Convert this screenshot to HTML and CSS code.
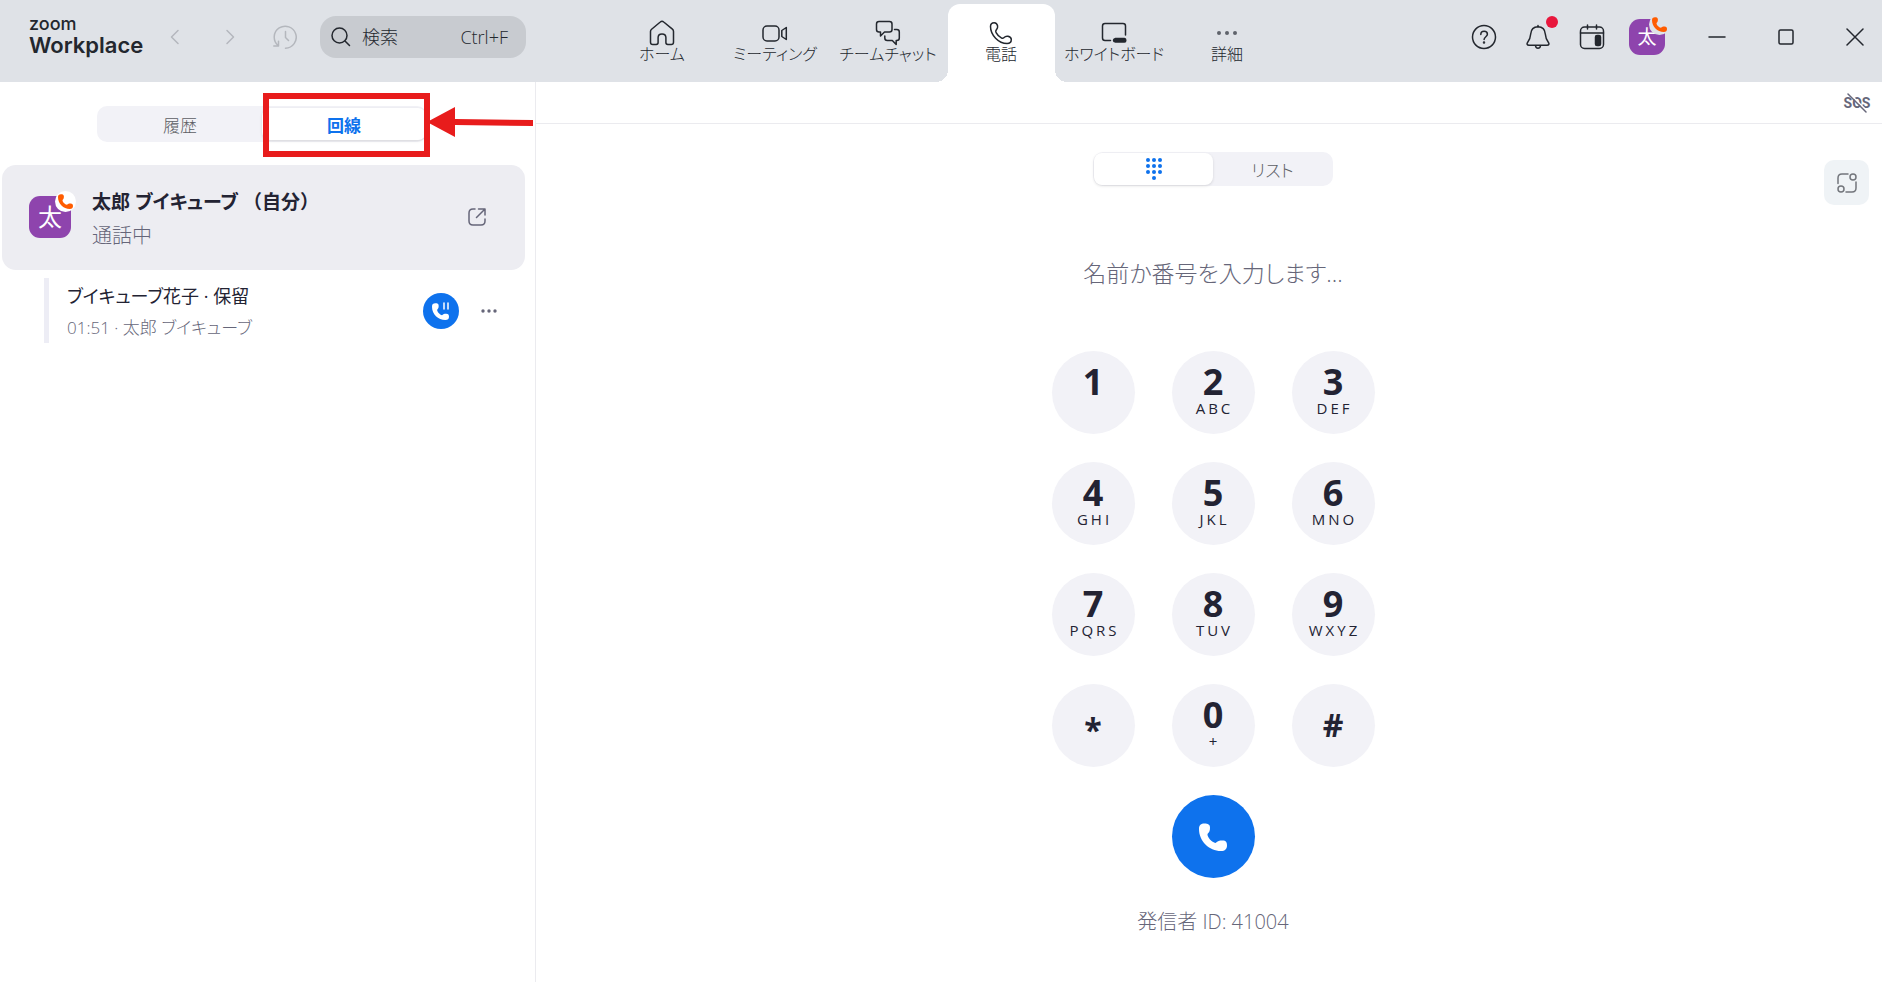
FILE: index.html
```html
<!DOCTYPE html>
<html lang="ja">

<head>
  <meta charset="UTF-8" />
  <meta name="viewport" content="width=device-width, initial-scale=1.0" />
  <title>Zoom Workplace</title>
  <link rel="stylesheet" href="styles.css">
</head>

<body>
  <!-- shared handset shape -->
  <svg class="defs" aria-hidden="true">
    <symbol id="handset" viewBox="0 0 28 28">
      <path d="M0 6C0 2 2 .5 5.5 .5S11 1.500 11 4.500 10.500 9 8.500 11C8 14 13 19.500 16.500 20 19 18 20 17.500 23.500 17.500S28 19 28 22.500 26 28 22 28C10 28 0 18 0 6Z" />
    </symbol>
  </svg>

  <header class="topbar">
    <div class="topbar-left">
      <div class="logo">
        <span class="logo-zoom">zoom</span>
        <span class="logo-work">Workplace</span>
      </div>
      <div class="history-nav">
        <button class="icon-btn faded" aria-label="戻る">
          <svg width="24" height="24" viewBox="0 0 24 24"><path d="M15 5.500L8.500 12l6.500 6.500" /></svg>
        </button>
        <button class="icon-btn faded" aria-label="進む">
          <svg width="24" height="24" viewBox="0 0 24 24"><path d="M9 5.500l6.500 6.500L9 18.500" /></svg>
        </button>
        <button class="icon-btn faded" aria-label="履歴を表示">
          <svg width="24" height="24" viewBox="0 0 24 24"><path d="M5 20.500A11 11 0 1 1 12.500 23.200M.8 21h4.700v-4.700M12.500 6.500v6l3 3" /></svg>
        </button>
      </div>
      <label class="search">
        <svg width="20" height="20" viewBox="0 0 20 20"><circle cx="8.500" cy="8.500" r="7.500" /><path d="M14 14L18.500 18.500" /></svg>
        <input type="text" placeholder="検索" aria-label="検索" />
        <span>Ctrl+F</span>
      </label>
    </div>

    <nav class="tabs">
      <button class="tab">
        <svg width="26" height="26" viewBox="0 0 26 26"><path d="M1.500 11.500c0-1 .4-1.700 1.100-2.300L11.300 2c1-.9 2.400-.9 3.400 0l8.700 7.200c.7.600 1.100 1.300 1.100 2.300v10.700c0 1.500-.8 2.300-2.300 2.300h-3.400c-1.200 0-1.900-.7-1.900-1.900v-5c0-2.200-1.500-3.700-3.900-3.700s-3.900 1.500-3.900 3.700v5c0 1.200-.7 1.900-1.900 1.900H3.800c-1.500 0-2.300-.8-2.300-2.300z" /></svg>
        ホーム
      </button>
      <button class="tab">
        <svg width="26" height="26" viewBox="0 0 26 26"><rect x="1" y="6" width="16" height="15" rx="4" /><path d="M24.300 7.500v12l-4.500-3v-6z" /></svg>
        ミーティング
      </button>
      <button class="tab">
        <svg width="26" height="26" viewBox="0 0 26 26"><path d="M4 1.500h10.500q2.500 0 2.500 2.500v5.500q0 2.500-2.500 2.500H9.500L5.500 16v-4H4Q1.500 12 1.500 9.500V4Q1.500 1.500 4 1.500zM19.500 9.500h2.300q2.500 0 2.500 2.500v6q0 2.500-2.500 2.500h-.6v4l-3.900-4h-5q-2.500 0-2.500-2.500v-2" /></svg>
        チームチャット
      </button>
      <button class="tab active">
        <svg width="26" height="26" viewBox="0 0 26 26"><path d="M2.500 6.500C2.500 4 4 2.700 6.200 2.700c2 0 3 1.300 3.400 3.200.4 2-.2 3-1.400 4.200-.7.700-.6 1.600-.1 2.500 1.200 2.300 2.900 4 5.200 5.200.9.500 1.800.6 2.500-.1 1.200-1.200 2.300-1.800 4.200-1.400 2 .4 3.300 1.400 3.300 3.200 0 2.500-1.500 4-4.200 4C10.500 23.500 2.500 15 2.500 6.500z" /></svg>
        電話
      </button>
      <button class="tab">
        <svg width="26" height="26" viewBox="0 0 26 26"><path d="M9.500 20.500H4Q1.500 20.500 1.500 18V6Q1.500 3.500 4 3.500h18q2.500 0 2.500 2.500v9" /><path class="solid" d="M14.500 18.500h9q1.300 0 1.300 1.800t-1.300 1.800h-9q-2-.4-2-1.800t2-1.800z" /></svg>
        ホワイトボード
      </button>
      <button class="tab">
        <svg width="26" height="26" viewBox="0 0 26 26"><g class="dots dots-soft"><circle cx="5" cy="13" r="2" /><circle cx="13" cy="13" r="2" /><circle cx="21" cy="13" r="2" /></g></svg>
        詳細
      </button>
    </nav>

    <div class="topbar-right">
      <button class="icon-btn" aria-label="ヘルプ">
        <svg width="26" height="26" viewBox="0 0 26 26"><circle cx="13" cy="13" r="11.500" /><path d="M9.800 10.500c0-2 1.400-3.200 3.300-3.200s3.300 1.200 3.300 3c0 2.400-3.300 2.500-3.300 5.200" /><circle class="solid" cx="13" cy="18.500" r=".5" /></svg>
      </button>
      <button class="icon-btn bell" aria-label="通知">
        <svg width="26" height="26" viewBox="0 0 26 26"><path d="M13 1.500v1.200M13 2.700c-4.400 0-7 3-7.300 7.300-.3 3.300-.7 5.500-3 8.300-1.300 1.700-.6 3 1.300 3h18c1.900 0 2.600-1.300 1.300-3-2.300-2.800-2.700-5-3-8.300-.3-4.300-2.900-7.300-7.300-7.300zM10.500 21.500c.2 3.500 4.800 3.500 5 0" /></svg>
      </button>
      <button class="icon-btn" aria-label="カレンダー">
        <svg width="26" height="26" viewBox="0 0 26 26"><rect x="1.500" y="3" width="23" height="21.500" rx="4" /><path d="M1.500 9h23M8.500 1v4M17.500 1v4" /><rect class="solid" x="16.500" y="11.500" width="5" height="10" rx="1.500" /></svg>
      </button>
      <button class="avatar avatar-top" aria-label="プロフィール">
        太
        <span class="badge"><svg width="15" height="15"><use href="#handset" /></svg></span>
      </button>
      <div class="window-btns">
        <button class="icon-btn" aria-label="最小化"><svg width="18" height="18" viewBox="0 0 18 18"><path d="M1 9h16" /></svg></button>
        <button class="icon-btn" aria-label="最大化"><svg width="18" height="18" viewBox="0 0 18 18"><rect x="2" y="2" width="14" height="14" rx="1.500" /></svg></button>
        <button class="icon-btn" aria-label="閉じる"><svg width="18" height="18" viewBox="0 0 18 18"><path d="M1 1l16 16M17 1L1 17" /></svg></button>
      </div>
    </div>
  </header>

  <div class="content">
    <aside class="sidebar">
      <div class="segment">
        <button>履歴</button>
        <button class="selected">回線</button>
        <!-- red callout around the selected segment -->
        <div class="callout"></div>
        <svg class="callout-arrow" width="106" height="30" viewBox="0 0 106 30"><path d="M0 15L28 0v12l78 1v6l-78-1v12z" /></svg>
      </div>

      <div class="line-card">
        <div class="avatar">
          太
          <span class="badge"><svg width="15" height="15"><use href="#handset" /></svg></span>
        </div>
        <div class="line-text">
          <h1>太郎 ブイキューブ <span>（自分）</span></h1>
          <p>通話中</p>
        </div>
        <button class="icon-btn muted" aria-label="開く">
          <svg width="18" height="18" viewBox="0 0 18 18"><path d="M7 1H5Q1 1 1 5v8q0 4 4 4h8q4 0 4-4v-2M10.500 1H17v6M17 1L8.500 9.500" /></svg>
        </button>
      </div>

      <div class="held-call">
        <div class="held-text">
          <h2>ブイキューブ花子 · 保留</h2>
          <p>01:51 · 太郎 ブイキューブ</p>
        </div>
        <button class="resume" aria-label="再開">
          <svg width="20" height="20" viewBox="0 0 20 20"><use href="#handset" x="1" y="2" width="17" height="17" /><path d="M13 2v6M17 2v6" /></svg>
        </button>
        <button class="icon-btn muted" aria-label="その他">
          <svg width="18" height="18" viewBox="0 0 18 18"><g class="dots"><circle cx="3" cy="9" r="1.700" /><circle cx="9" cy="9" r="1.700" /><circle cx="15" cy="9" r="1.700" /></g></svg>
        </button>
      </div>
    </aside>

    <main class="phone">
      <div class="subbar">
        <div class="sos">
          <span>SOS</span>
          <svg width="24" height="20" viewBox="0 0 24 20"><path class="gap" d="M4.500 .5l18 18" /><path d="M3 1l18 18" /></svg>
        </div>
      </div>

      <button class="route-btn" aria-label="転送設定">
        <svg width="20" height="20" viewBox="0 0 20 20"><path d="M1 10.500V5q0-4 4-4h6M19 9v6q0 4-4 4H9" /><circle cx="16" cy="4" r="3" /><circle cx="4" cy="16" r="3" /></svg>
      </button>

      <div class="dialer">
        <div class="toggle">
          <button class="selected" aria-label="ダイヤルパッド">
            <svg width="18" height="24" viewBox="0 0 18 24">
              <circle cx="3" cy="3" r="2" /><circle cx="9" cy="3" r="2" /><circle cx="15" cy="3" r="2" />
              <circle cx="3" cy="9" r="2" /><circle cx="9" cy="9" r="2" /><circle cx="15" cy="9" r="2" />
              <circle cx="3" cy="15" r="2" /><circle cx="9" cy="15" r="2" /><circle cx="15" cy="15" r="2" />
              <circle cx="9" cy="21" r="2" />
            </svg>
          </button>
          <button>リスト</button>
        </div>

        <input class="number" type="text" placeholder="名前か番号を入力します..." aria-label="名前か番号" />

        <div class="keypad">
          <button class="key"><b>1</b><span></span></button>
          <button class="key"><b>2</b><span>ABC</span></button>
          <button class="key"><b>3</b><span>DEF</span></button>
          <button class="key"><b>4</b><span>GHI</span></button>
          <button class="key"><b>5</b><span>JKL</span></button>
          <button class="key"><b>6</b><span>MNO</span></button>
          <button class="key"><b>7</b><span>PQRS</span></button>
          <button class="key"><b>8</b><span>TUV</span></button>
          <button class="key"><b>9</b><span>WXYZ</span></button>
          <button class="key symbol star"><b>*</b></button>
          <button class="key"><b>0</b><span>+</span></button>
          <button class="key symbol"><b>#</b></button>
        </div>

        <button class="call" aria-label="発信">
          <svg width="28" height="28"><use href="#handset" /></svg>
        </button>
        <p class="caller-id">発信者 ID: 41004</p>
      </div>
    </main>
  </div>
</body>

</html>
```
FILE: styles.css
```css
:root {
  --bar: #dfe2e7;
  --ink: #23272e;
  --dark: #232333;
  --muted: #666679;
  --soft: #f2f2f7;
  --blue: #0e72ed;
  --orange: #ff5c00;
  --purple: #8e44ad;
  --red: #e81c1c;
}

* {
  box-sizing: border-box;
}

body {
  margin: 0;
  min-height: 100vh;
  display: flex;
  flex-direction: column;
  font-family: "Open Sans", "Noto Sans CJK JP", sans-serif;
  font-feature-settings: "palt";
  font-weight: 300;
  color: var(--dark);
  background: #fff;
}

button,
input {
  font: inherit;
  font-feature-settings: inherit;
  color: inherit;
  border: none;
  background: none;
  padding: 0;
}

button {
  cursor: pointer;
}

h1,
h2,
p {
  margin: 0;
}

svg {
  display: block;
  flex: none;
  fill: none;
  stroke: currentColor;
  stroke-width: 1.5;
  stroke-linecap: round;
  stroke-linejoin: round;
}

.defs {
  position: absolute;
  width: 0;
  height: 0;
}

.solid,
.dots {
  fill: currentColor;
}

.dots {
  stroke: none;
}

.dots-soft {
  fill: #5f636b;
}

/* top bar */
.topbar {
  display: grid;
  grid-template-columns: 1fr auto 1fr;
  height: 82px;
  padding: 0 18px 0 25px;
  background: var(--bar);
  color: var(--ink);
}

.topbar-left,
.topbar-right {
  display: flex;
  align-items: center;
  height: 74px;
}

.logo {
  display: flex;
  flex-direction: column;
  width: 138px;
  padding-left: 4px;
  font-family: Inter, sans-serif;
}

.logo-zoom {
  font-size: 18px;
  font-weight: 500;
  line-height: 16px;
}

.logo-work {
  font-size: 22px;
  font-weight: 600;
  line-height: 26px;
}

.history-nav {
  display: flex;
  gap: 31px;
}

.icon-btn {
  display: flex;
}

.faded {
  color: #b4b7bd;
}

.search {
  display: flex;
  align-items: center;
  gap: 11px;
  width: 206px;
  height: 42px;
  margin-left: 23px;
  padding: 0 18px 0 11px;
  border-radius: 16px;
  background: #c8cbd0;
  font-size: 18px;
}

.search input {
  flex: 1;
  min-width: 0;
}

.search input::placeholder {
  color: var(--ink);
  opacity: 1;
}

.tabs {
  display: flex;
  gap: 6px;
  padding-top: 4px;
}

.tab {
  position: relative;
  display: flex;
  flex-direction: column;
  align-items: center;
  width: 107px;
  padding-top: 16px;
  font-size: 16px;
  line-height: 16px;
  white-space: nowrap;
}

.tab.active {
  background: #fff;
  border-radius: 12px 12px 0 0;
}

.tab.active::before,
.tab.active::after {
  content: "";
  position: absolute;
  bottom: 0;
  width: 12px;
  height: 12px;
}

.tab.active::before {
  right: 100%;
  background: radial-gradient(circle at 0 0, transparent 12px, #fff 12px);
}

.tab.active::after {
  left: 100%;
  background: radial-gradient(circle at 100% 0, transparent 12px, #fff 12px);
}

.topbar-right {
  justify-content: flex-end;
  gap: 28px;
}

.bell {
  position: relative;
}

.bell::after {
  content: "";
  position: absolute;
  top: -8px;
  right: -7px;
  width: 12px;
  height: 12px;
  border-radius: 50%;
  background: #e8173d;
}

.avatar {
  position: relative;
  flex: none;
  width: 42px;
  height: 42px;
  border-radius: 11px;
  background: var(--purple);
  color: #fff;
  font-size: 24px;
  font-weight: 400;
  line-height: 42px;
  text-align: center;
}

.avatar-top {
  width: 36px;
  height: 36px;
  margin-left: -4px;
  font-size: 19px;
  line-height: 36px;
}

.badge {
  position: absolute;
  top: -5px;
  right: -5px;
  display: flex;
  align-items: center;
  justify-content: center;
  width: 21px;
  height: 21px;
  border-radius: 50%;
  background: #fff;
  color: var(--orange);
}

.avatar-top .badge {
  background: var(--bar);
}

.badge svg,
.call svg {
  fill: currentColor;
  stroke: none;
}

.window-btns {
  display: flex;
  gap: 51px;
  margin-left: 15px;
}

/* sidebar */
.content {
  flex: 1;
  display: flex;
}

.sidebar {
  flex: none;
  width: 536px;
  padding-top: 24px;
  border-right: 1px solid #ebebef;
}

.segment {
  position: relative;
  display: flex;
  width: 330px;
  height: 36px;
  margin: 0 auto 23px 97px;
  padding: 2px 1px;
  border-radius: 10px;
  background: var(--soft);
  color: #5c5e64;
  font-size: 17px;
}

.segment button,
.toggle button {
  flex: 1;
  display: flex;
  align-items: center;
  justify-content: center;
}

.segment .selected,
.toggle .selected {
  border-radius: 8px;
  background: #fff;
  box-shadow: 0 1px 3px rgba(0, 0, 0, 0.12);
  color: var(--blue);
  font-weight: bold;
}

.callout {
  position: absolute;
  top: -13px;
  right: -3px;
  width: 167px;
  height: 64px;
  border: 6px solid var(--red);
}

.callout-arrow {
  position: absolute;
  top: 1px;
  left: 100%;
  fill: var(--red);
  stroke: none;
}

.line-card {
  display: flex;
  align-items: center;
  gap: 21px;
  height: 105px;
  margin: 0 10px 8px 2px;
  padding: 0 39px 2px 27px;
  border-radius: 14px;
  background: #ededf2;
}

.line-text {
  flex: 1;
  padding-top: 4px;
}

.line-text h1 {
  font-size: 19px;
  font-weight: bold;
  line-height: 34px;
}

/* full-width brackets keep their own spacing */
.line-text h1 span {
  font-feature-settings: normal;
}

.line-text p {
  color: var(--muted);
  font-size: 20px;
  line-height: 34px;
}

.muted {
  color: var(--muted);
}

.held-call {
  display: flex;
  align-items: center;
  height: 65px;
  margin: 0 37px 0 44px;
  padding-left: 18px;
  border-left: 5px solid #ededf5;
}

.held-text {
  flex: 1;
  padding-top: 2px;
}

.held-text h2 {
  font-size: 18px;
  font-weight: 400;
  line-height: 32px;
}

.held-text p {
  color: var(--muted);
  font-size: 17px;
  line-height: 32px;
}

.resume {
  display: flex;
  align-items: center;
  justify-content: center;
  width: 36px;
  height: 36px;
  margin-right: 21px;
  border-radius: 50%;
  background: var(--blue);
  color: #fff;
}

.resume use {
  fill: currentColor;
  stroke: none;
}

/* phone */
.phone {
  position: relative;
  flex: 1;
}

.subbar {
  display: flex;
  align-items: center;
  justify-content: flex-end;
  height: 42px;
  padding-right: 13px;
  border-bottom: 1px solid #ebebef;
}

.sos {
  position: relative;
  display: flex;
  justify-content: center;
  width: 24px;
  color: var(--muted);
  font-family: "Liberation Sans Narrow", Roboto, sans-serif;
  font-size: 14px;
  font-weight: bold;
  line-height: 20px;
}

.sos svg {
  position: absolute;
  top: 0;
  left: 0;
}

.sos .gap {
  stroke: #fff;
}

.route-btn {
  position: absolute;
  top: 78px;
  right: 13px;
  display: flex;
  align-items: center;
  justify-content: center;
  width: 45px;
  height: 45px;
  border-radius: 10px;
  background: #eff3f6;
  color: #73767c;
}

.dialer {
  display: flex;
  flex-direction: column;
  align-items: center;
  padding: 28px 0 20px 8px;
}

.toggle {
  display: flex;
  width: 240px;
  height: 34px;
  padding: 1px;
  border-radius: 10px;
  background: var(--soft);
  color: #5c5e64;
  font-size: 17px;
}

.toggle svg {
  fill: currentColor;
  stroke: none;
}

.number {
  width: 400px;
  height: 40px;
  margin: 67px 0 58px;
  font-size: 23px;
  text-align: center;
}

.number::placeholder {
  color: var(--muted);
  opacity: 1;
}

.keypad {
  display: grid;
  grid-template-columns: repeat(3, 83px);
  gap: 28px 37px;
}

.key {
  display: flex;
  flex-direction: column;
  align-items: center;
  width: 83px;
  height: 83px;
  padding-top: 13px;
  border-radius: 50%;
  background: var(--soft);
}

.key b {
  font-size: 36px;
  font-weight: 700;
  line-height: 36px;
}

.key span {
  padding-left: 3px;
  font-size: 15px;
  font-weight: 400;
  line-height: 16px;
  letter-spacing: 3px;
}

.symbol {
  padding-top: 23px;
}

.symbol b {
  font-size: 32px;
}

.star {
  padding-top: 28px;
}

.call {
  display: flex;
  align-items: center;
  justify-content: center;
  width: 83px;
  height: 83px;
  margin: 28px 0;
  border-radius: 50%;
  background: var(--blue);
  color: #fff;
}

.caller-id {
  color: var(--muted);
  font-size: 20px;
  line-height: 32px;
}
```
